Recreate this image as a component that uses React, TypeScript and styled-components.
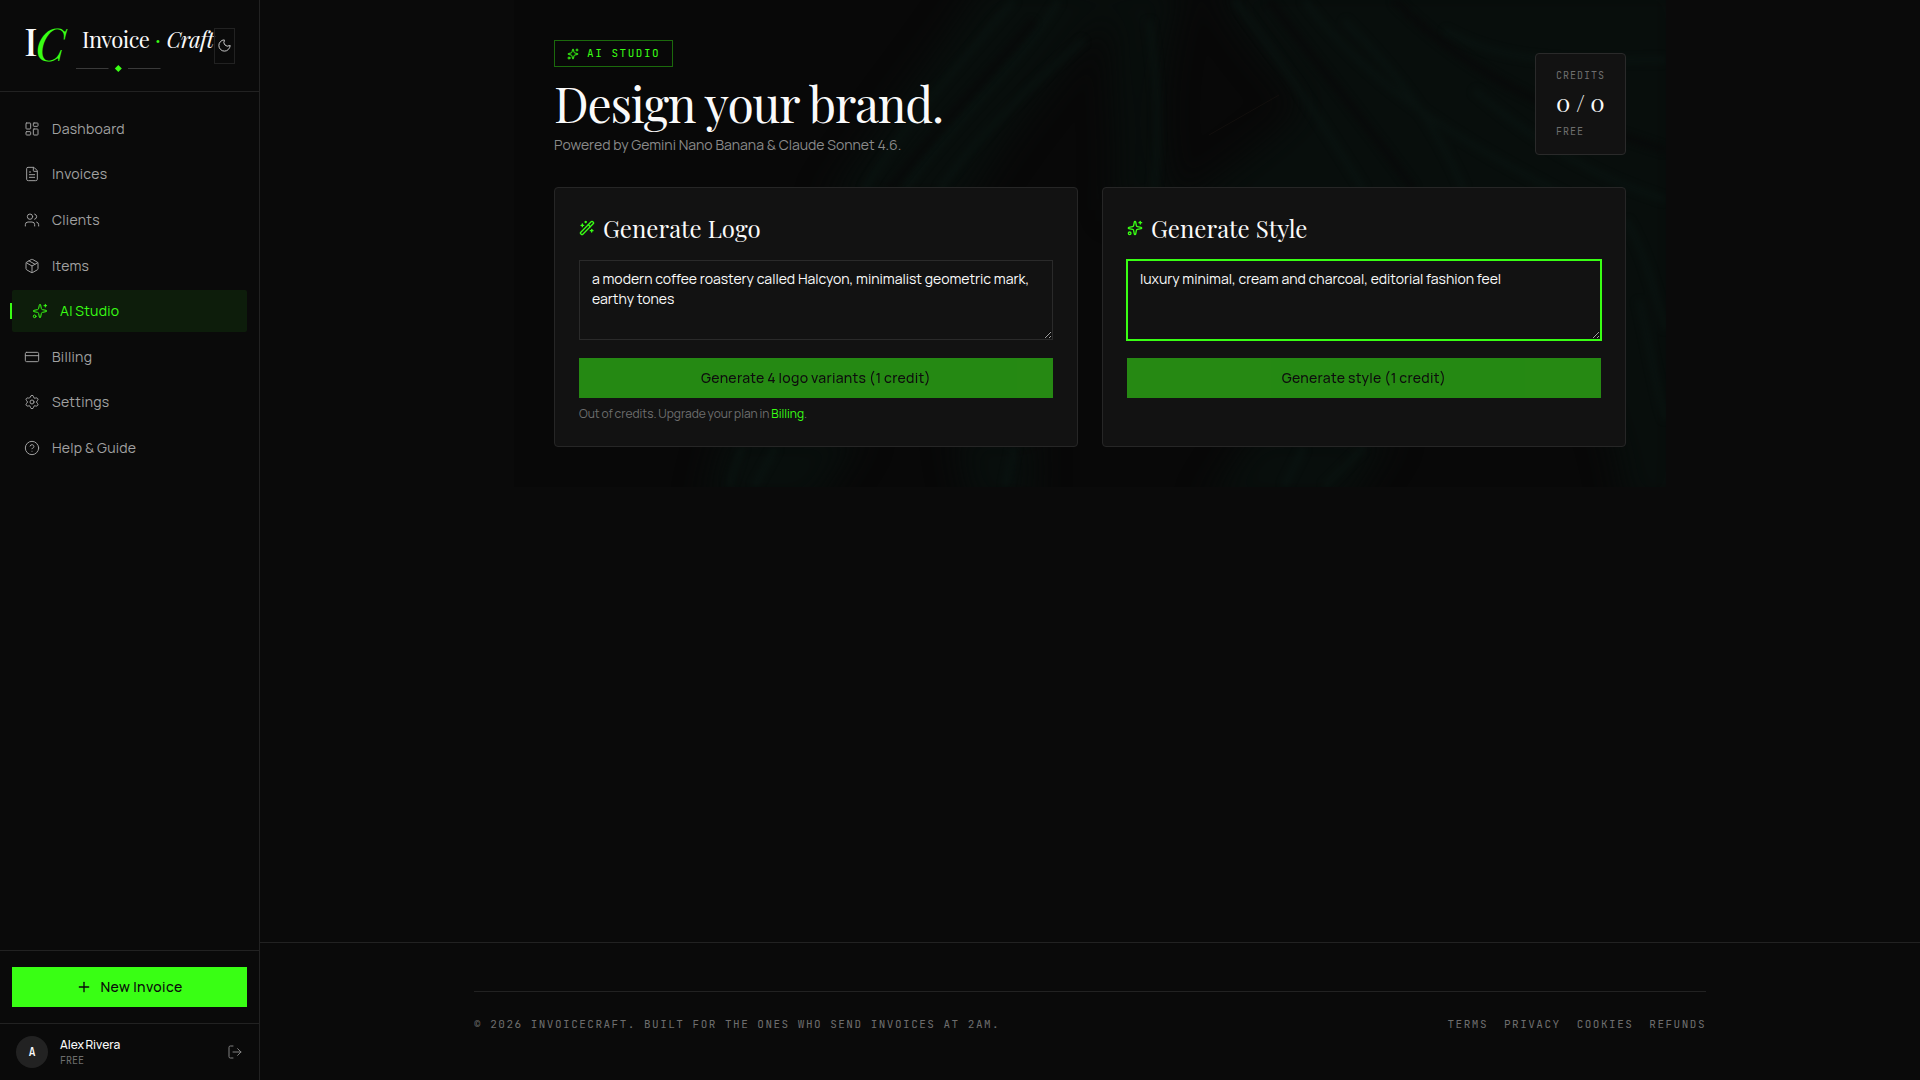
import React from "react";
import styled, { createGlobalStyle, css } from "styled-components";
import {
  CircleHelp,
  CreditCard,
  FileText,
  LayoutDashboard,
  LogOut,
  Moon,
  Package,
  Plus,
  Settings,
  Sparkles,
  Users,
  WandSparkles,
  type LucideIcon,
} from "lucide-react";

const color = {
  bg: "#0a0a0a",
  card: "#121212",
  line: "#222222",
  text: "#fafafa",
  muted: "#a1a1a1",
  dim: "#6e6e6e",
  accent: "#39ff14",
};

const serif = `"Playfair Display", "Liberation Serif", serif`;
const sans = `Manrope, Inter, "Liberation Sans", sans-serif`;
const mono = `"JetBrains Mono", "DejaVu Sans Mono", monospace`;

const GlobalStyle = createGlobalStyle`
  *, *::before, *::after { box-sizing: border-box; }
  body {
    margin: 0;
    background: ${color.bg};
    color: ${color.text};
    font-family: ${sans};
    font-size: 14px;
    line-height: 20px;
    -webkit-font-smoothing: antialiased;
  }
  h1, h2, p { margin: 0; font-weight: 400; }
  a { color: inherit; text-decoration: none; }
  svg { display: block; flex: none; }
`;

const Shell = styled.div`
  display: grid;
  grid-template-columns: 260px 1fr;
  height: 100vh;
`;

const Sidebar = styled.aside`
  display: flex;
  flex-direction: column;
  border-right: 1px solid ${color.line};
`;

const Brand = styled.div`
  display: flex;
  align-items: center;
  height: 92px;
  padding-left: 24px;
  border-bottom: 1px solid ${color.line};
`;

const ThemeButton = styled.button`
  display: flex;
  align-items: center;
  justify-content: center;
  width: 21px;
  height: 36px;
  padding: 0;
  border: 1px solid ${color.line};
  background: none;
  color: #d4d4d4;
`;

const Nav = styled.nav`
  flex: 1;
  display: flex;
  flex-direction: column;
  gap: 4px;
  padding: 16px 12px;
`;

const NavItem = styled.a<{ $active?: boolean }>`
  position: relative;
  display: flex;
  align-items: center;
  gap: 12px;
  height: 41.6px;
  padding: 0 12px;
  color: ${color.muted};
  letter-spacing: 0.02em;
  word-spacing: -0.5px;
  ${(p) =>
    p.$active &&
    css`
      padding-left: 20px;
      border-radius: 2px;
      background: rgba(57, 255, 20, 0.08);
      color: ${color.accent};
      &::before {
        content: "";
        position: absolute;
        left: -2px;
        top: 13px;
        width: 2px;
        height: 16px;
        background: ${color.accent};
      }
    `}
`;

const NewInvoiceArea = styled.div`
  padding: 16px 12px;
  border-top: 1px solid ${color.line};
`;

const PrimaryButton = styled.button`
  display: flex;
  align-items: center;
  justify-content: center;
  gap: 8px;
  width: 100%;
  height: 40px;
  border: 0;
  background: ${color.accent};
  color: ${color.bg};
  font: 500 14px/20px ${sans};
  letter-spacing: 0.025em;
  &:disabled {
    opacity: 0.5;
    letter-spacing: 0.02em;
    word-spacing: -0.4px;
  }
`;

const UserRow = styled.div`
  display: flex;
  align-items: center;
  gap: 12px;
  height: 57px;
  padding: 0 16px;
  border-top: 1px solid ${color.line};
`;

const Avatar = styled.div`
  display: grid;
  place-items: center;
  width: 32px;
  height: 32px;
  border-radius: 50%;
  background: #222222;
  font: 500 12px/16px ${mono};
`;

const UserInfo = styled.div`
  flex: 1;
`;

const UserName = styled.div`
  font-size: 12px;
  font-weight: 500;
  line-height: 16px;
  word-spacing: -1px;
`;

const UserPlan = styled.div`
  color: ${color.dim};
  font: 400 10px/15px ${mono};
`;

const IconLink = styled.a`
  color: #808080;
`;

const Main = styled.div`
  display: flex;
  flex-direction: column;
  min-width: 0;
`;

const Content = styled.main`
  flex: 1;
`;

const Studio = styled.section`
  position: relative;
  isolation: isolate;
  width: 1152px;
  margin: 0 auto;
  padding: 40px;
`;

const Backdrop = styled.svg`
  position: absolute;
  inset: 0;
  z-index: -1;
  width: 100%;
  height: 100%;
`;

const StudioHeader = styled.header`
  display: flex;
  align-items: flex-end;
  justify-content: space-between;
  margin-bottom: 32px;
`;

const Badge = styled.div`
  display: inline-flex;
  align-items: center;
  gap: 8px;
  height: 27px;
  padding: 0 12px;
  border: 1px solid rgba(57, 255, 20, 0.4);
  color: ${color.accent};
  font: 400 11px/17px ${mono};
  letter-spacing: 0.14em;
`;

const Title = styled.h1`
  margin-top: 12px;
  font: 400 48px/48px ${serif};
  letter-spacing: -0.025em;
`;

const Subtitle = styled.p`
  margin-top: 8px;
  color: #8a8a8a;
`;

const HeaderText = styled.div`
  display: flex;
  flex-direction: column;
  align-items: flex-start;
`;

const Credits = styled.div`
  width: 91px;
  padding: 14px 20px;
  height: 102px;
  border: 1px solid #2a2a2a;
  border-radius: 4px;
  background: ${color.card};
`;

const CreditsLabel = styled.div`
  color: ${color.dim};
  font: 400 10px/15px ${mono};
  letter-spacing: 0.1em;
`;

const CreditsValue = styled.div`
  margin: 1px 0 4px;
  font: 400 24px/36px ${serif};
  letter-spacing: -0.01em;
  white-space: nowrap;
`;

const Cards = styled.div`
  display: grid;
  grid-template-columns: 1fr 1fr;
  gap: 24px;
`;

const Card = styled.div`
  height: 260px;
  padding: 24px;
  border: 1px solid #262626;
  border-radius: 4px;
  background: ${color.card};
`;

const CardTitle = styled.h2`
  display: flex;
  align-items: center;
  gap: 8px;
  margin-bottom: 16px;
  font: 400 24px/32px ${serif};
  svg {
    color: ${color.accent};
  }
`;

const Prompt = styled.textarea<{ $focused?: boolean }>`
  display: block;
  width: 100%;
  height: 80px;
  margin: 0 0 18px;
  padding: 8px 12px;
  border: 1px solid ${(p) => (p.$focused ? color.accent : "#2a2a2a")};
  border-radius: 0;
  outline: none;
  box-shadow: ${(p) => (p.$focused ? `0 0 0 1px ${color.accent}` : "none")};
  background: ${color.card};
  color: ${color.text};
  font: 400 14px/20px ${sans};
  letter-spacing: -0.01px;
  resize: vertical;
`;

const Hint = styled.p`
  margin-top: 8px;
  color: ${color.dim};
  font-size: 12px;
  line-height: 16px;
  word-spacing: -0.6px;
  a {
    color: ${color.accent};
  }
`;

const Footer = styled.footer`
  height: 138px;
  padding-top: 48px;
  border-top: 1px solid ${color.line};
`;

const FooterInner = styled.div`
  display: flex;
  justify-content: space-between;
  width: 1232px;
  margin: 0 auto;
  padding-top: 24px;
  border-top: 1px solid ${color.line};
  color: ${color.dim};
  font: 400 11px/17px ${mono};
  letter-spacing: 1.495px;
  text-transform: uppercase;
`;

const FooterLinks = styled.div`
  display: flex;
  gap: 16px;
`;

const LogoSvg = styled.svg`
  width: 190px;
  height: 56px;
  overflow: visible;
`;

const Logo = () => (
  <LogoSvg viewBox="24 18 190 56">
    <text x="24.3" y="56" fontFamily={serif} fontSize="38" fontWeight="500" fill="#fafafa">
      I
    </text>
    <text x="35.4" y="61" fontFamily={serif} fontSize="45" fontStyle="italic" fill={color.accent}>
      C
    </text>
    <g fontFamily={serif} fontSize="22" letterSpacing="-0.55" fill="#fafafa">
      <text x="82" y="47.7">Invoice</text>
      <text x="155" y="47.7" fill={color.accent}>·</text>
      <text x="166.6" y="47.7" fontStyle="italic">Craft</text>
    </g>
    <path d="M76 68.5h32.500M128 68.5h32.500" stroke="#3a3a3a" />
    <path d="M118.300 65l3.500 3.500-3.500 3.500-3.500-3.500z" fill={color.accent} />
  </LogoSvg>
);

const StudioBackdrop = () => (
  <Backdrop viewBox="0 0 1152 487" preserveAspectRatio="none">
    <defs>
      <filter id="soft" x="-10%" y="-10%" width="120%" height="120%" colorInterpolationFilters="sRGB">
        <feGaussianBlur stdDeviation="16" />
      </filter>
      <filter id="fine" x="-5%" y="-5%" width="110%" height="110%" colorInterpolationFilters="sRGB">
        <feGaussianBlur stdDeviation="3" />
      </filter>
    </defs>
    <rect width="1152" height="487" fill="#080808" />
    <g filter="url(#soft)" fill="#080e0c">
      <path d="M470 -20L620 -20C560 60 500 120 450 210L310 210C350 140 420 60 470 -20z" />
      <path d="M600 -20L670 -20C645 70 640 120 660 210L600 210C605 120 590 60 600 -20z" />
      <path d="M700 -20L1170 -20L1170 510L1110 510C1100 380 1020 260 900 220L640 220C700 180 770 130 790 105C760 70 720 30 700 -20z" />
      <path d="M210 430H350L300 510H190zM440 430H520V510H455z" />
      <path d="M740 430H880L830 510H690z" />
    </g>
    <g filter="url(#fine)" fill="none" stroke="#0a1411" strokeWidth="7" opacity=".7">
      <path d="M500 0C450 60 400 110 350 190M570 40C510 90 470 130 425 190M545 0C510 60 440 120 390 190" />
      <path d="M720 0C760 50 800 110 850 190M790 0C850 80 940 140 1060 200M830 20C880 70 920 120 950 190M635 20C645 90 645 140 640 190" />
      <path d="M1152 60C1080 60 1000 70 930 30M1152 200C1090 180 1030 150 960 90M1152 330C1140 290 1130 250 1112 220M1152 420C1140 380 1135 340 1125 300" />
      <path d="M228 447L215 487M262 447L240 487M500 447L492 487M790 447L770 487M850 447L810 487" />
    </g>
    <g filter="url(#fine)" fill="none" stroke="#080909" strokeWidth="8" opacity=".8">
      <path d="M755 0C800 60 850 120 900 190M880 0C940 60 1020 110 1152 150M520 20C480 70 420 130 375 190" />
    </g>
    <path d="M695 135L765 95" stroke="#120f0d" />
  </Backdrop>
);

const navItems: { label: string; icon: LucideIcon; active?: boolean }[] = [
  { label: "Dashboard", icon: LayoutDashboard },
  { label: "Invoices", icon: FileText },
  { label: "Clients", icon: Users },
  { label: "Items", icon: Package },
  { label: "AI Studio", icon: Sparkles, active: true },
  { label: "Billing", icon: CreditCard },
  { label: "Settings", icon: Settings },
  { label: "Help & Guide", icon: CircleHelp },
];

export default function App() {
  return (
    <Shell>
      <GlobalStyle />
      <Sidebar>
        <Brand>
          <Logo />
          <ThemeButton aria-label="Toggle theme">
            <Moon size={15} strokeWidth={1.5} />
          </ThemeButton>
        </Brand>
        <Nav>
          {navItems.map(({ label, icon: Icon, active }) => (
            <NavItem key={label} $active={active}>
              <Icon size={16} strokeWidth={1.5} />
              {label}
            </NavItem>
          ))}
        </Nav>
        <NewInvoiceArea>
          <PrimaryButton>
            <Plus size={16} strokeWidth={2} />
            New Invoice
          </PrimaryButton>
        </NewInvoiceArea>
        <UserRow>
          <Avatar>A</Avatar>
          <UserInfo>
            <UserName>Alex Rivera</UserName>
            <UserPlan>FREE</UserPlan>
          </UserInfo>
          <IconLink aria-label="Log out">
            <LogOut size={16} strokeWidth={1.5} />
          </IconLink>
        </UserRow>
      </Sidebar>
      <Main>
        <Content>
          <Studio>
            <StudioBackdrop />
            <StudioHeader>
              <HeaderText>
                <Badge>
                  <Sparkles size={12} strokeWidth={2} />
                  AI STUDIO
                </Badge>
                <Title>Design your brand.</Title>
                <Subtitle>Powered by Gemini Nano Banana &amp; Claude Sonnet 4.6.</Subtitle>
              </HeaderText>
              <Credits>
                <CreditsLabel>CREDITS</CreditsLabel>
                <CreditsValue>0 / 0</CreditsValue>
                <CreditsLabel>FREE</CreditsLabel>
              </Credits>
            </StudioHeader>
            <Cards>
              <Card>
                <CardTitle>
                  <WandSparkles size={16} strokeWidth={2} />
                  Generate Logo
                </CardTitle>
                <Prompt defaultValue="a modern coffee roastery called Halcyon, minimalist geometric mark, earthy tones" />
                <PrimaryButton disabled>Generate 4 logo variants (1 credit)</PrimaryButton>
                <Hint>
                  Out of credits. Upgrade your plan in <a>Billing</a>.
                </Hint>
              </Card>
              <Card>
                <CardTitle>
                  <Sparkles size={16} strokeWidth={2} />
                  Generate Style
                </CardTitle>
                <Prompt
                  $focused
                  defaultValue="luxury minimal, cream and charcoal, editorial fashion feel"
                />
                <PrimaryButton disabled>Generate style (1 credit)</PrimaryButton>
              </Card>
            </Cards>
          </Studio>
        </Content>
        <Footer>
          <FooterInner>
            <span>© 2026 InvoiceCraft. Built for the ones who send invoices at 2am.</span>
            <FooterLinks>
              <a>Terms</a>
              <a>Privacy</a>
              <a>Cookies</a>
              <a>Refunds</a>
            </FooterLinks>
          </FooterInner>
        </Footer>
      </Main>
    </Shell>
  );
}
